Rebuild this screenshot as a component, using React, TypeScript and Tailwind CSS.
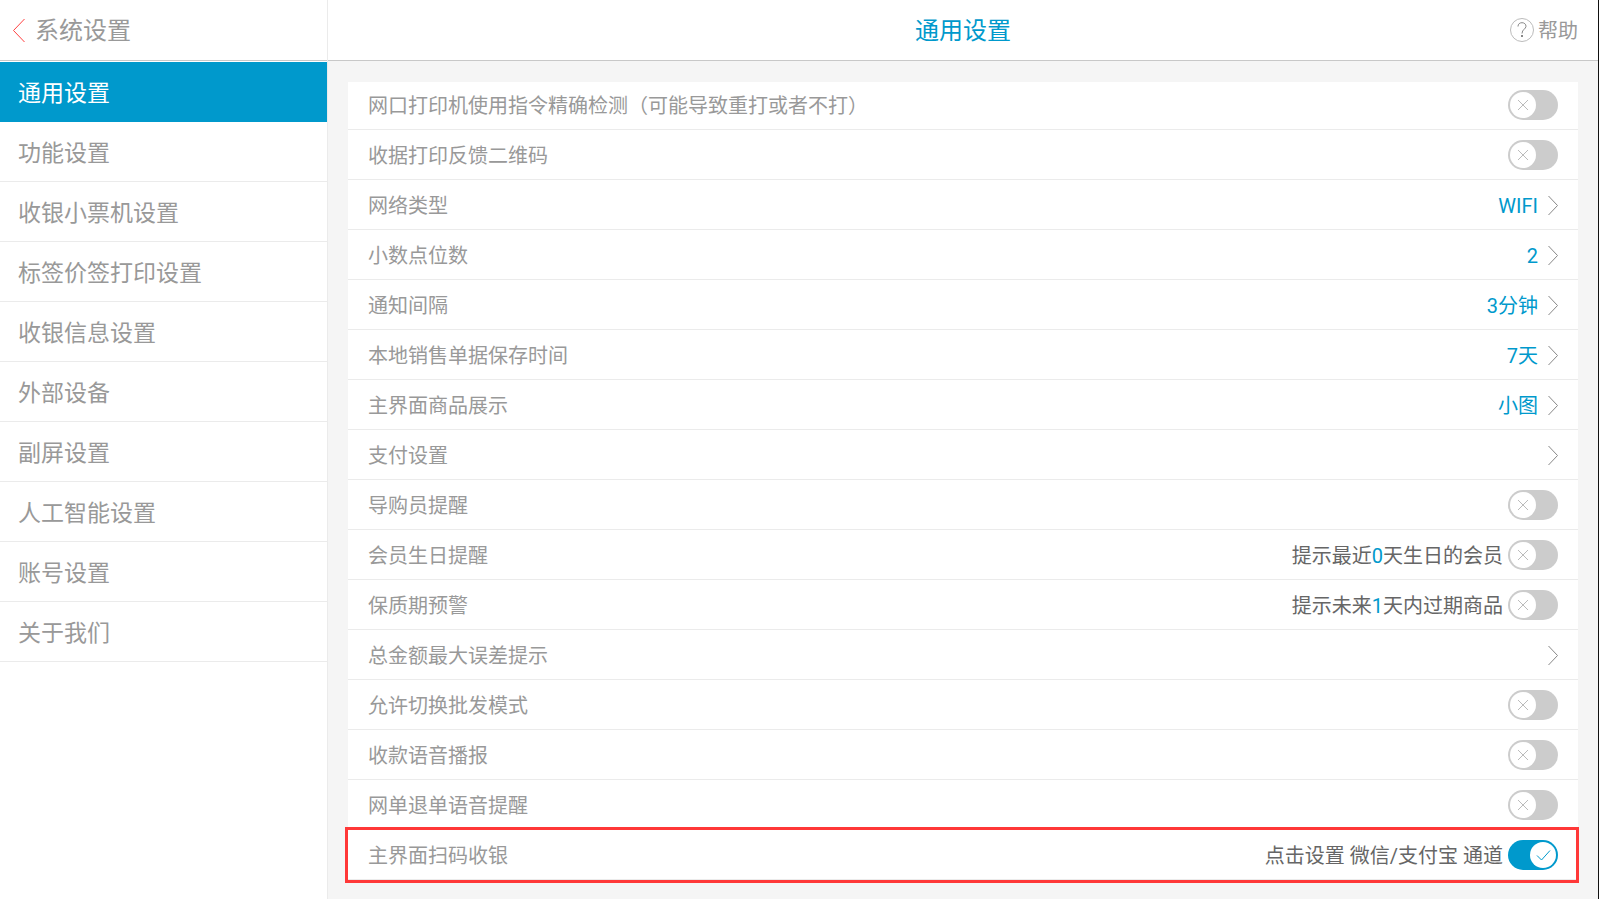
import { useState } from 'react';

interface Setting {
  key: string;
  label: string;
  type: 'toggle' | 'link';
  value?: string;
  hint?: [string, string, string];
  action?: string;
  highlight?: boolean;
}

const MENU = [
  '通用设置',
  '功能设置',
  '收银小票机设置',
  '标签价签打印设置',
  '收银信息设置',
  '外部设备',
  '副屏设置',
  '人工智能设置',
  '账号设置',
  '关于我们',
];

const SETTINGS: Setting[] = [
  { key: 'lan-printer', label: '网口打印机使用指令精确检测（可能导致重打或者不打）', type: 'toggle' },
  { key: 'receipt-qr', label: '收据打印反馈二维码', type: 'toggle' },
  { key: 'network', label: '网络类型', type: 'link', value: 'WIFI' },
  { key: 'decimals', label: '小数点位数', type: 'link', value: '2' },
  { key: 'notify', label: '通知间隔', type: 'link', value: '3分钟' },
  { key: 'retention', label: '本地销售单据保存时间', type: 'link', value: '7天' },
  { key: 'display', label: '主界面商品展示', type: 'link', value: '小图' },
  { key: 'payment', label: '支付设置', type: 'link' },
  { key: 'guide', label: '导购员提醒', type: 'toggle' },
  { key: 'birthday', label: '会员生日提醒', type: 'toggle', hint: ['提示最近', '0', '天生日的会员'] },
  { key: 'expiry', label: '保质期预警', type: 'toggle', hint: ['提示未来', '1', '天内过期商品'] },
  { key: 'deviation', label: '总金额最大误差提示', type: 'link' },
  { key: 'wholesale', label: '允许切换批发模式', type: 'toggle' },
  { key: 'pay-voice', label: '收款语音播报', type: 'toggle' },
  { key: 'refund-voice', label: '网单退单语音提醒', type: 'toggle' },
  { key: 'scan-pay', label: '主界面扫码收银', type: 'toggle', action: '点击设置 微信/支付宝 通道', highlight: true },
];

function Chevron() {
  return (
    <svg className="w-[10px] h-5 shrink-0" viewBox="0 0 10 20" fill="none" stroke="#888" strokeWidth="1" aria-hidden="true">
      <path d="M0.5 1L9.5 10.5L0.5 20" />
    </svg>
  );
}

function Toggle({ id, checked, onChange }: { id: string; checked: boolean; onChange: () => void }) {
  return (
    <span className="relative w-[50px] h-[30px] shrink-0">
      <input
        id={id}
        type="checkbox"
        checked={checked}
        onChange={onChange}
        className="block w-full h-full appearance-none rounded-full bg-[#ccc] checked:bg-[#0099cc] cursor-pointer"
      />
      <svg className="absolute inset-0 w-full h-full pointer-events-none" viewBox="0 0 50 30" fill="none" aria-hidden="true">
        <circle cx={checked ? 35 : 15} cy="15" r="13" fill="#fff" />
        {checked ? (
          <path d="M29 15.5L33.5 20L42 10.5" stroke="#0099cc" />
        ) : (
          <path d="M10 10L20 20M20 10L10 20" stroke="#bbb" />
        )}
      </svg>
    </span>
  );
}

function SettingRow({ item, checked, onToggle }: { item: Setting; checked: boolean; onToggle: () => void }) {
  const row =
    'relative flex items-center w-full h-[50px] pt-px pl-5 pr-5 border-b border-[#ebebeb] text-xl leading-6 text-[#999] group-first:h-12 group-first:pt-0 group-first:pb-px';

  if (item.type === 'link') {
    return (
      <button type="button" className={`${row} text-left`}>
        <span className="flex-1 pt-0.5">{item.label}</span>
        {item.value && <span className="pt-0.5 mr-[10px] text-[#0099cc]">{item.value}</span>}
        <Chevron />
      </button>
    );
  }

  return (
    <div className={row}>
      <label htmlFor={item.key} className="flex-1 pt-0.5">
        {item.label}
      </label>
      {item.hint && (
        <span className="pt-0.5 mr-[5px] text-[#666]">
          {item.hint[0]}
          <button type="button" className="text-[#0099cc]">{item.hint[1]}</button>
          {item.hint[2]}
        </span>
      )}
      {item.action && (
        <button type="button" className="pt-0.5 mr-[5px] text-[#666]">{item.action}</button>
      )}
      <Toggle id={item.key} checked={checked} onChange={onToggle} />
      {item.highlight && (
        <div className="absolute -top-[3px] -left-[3px] -right-px -bottom-1 border-3 border-[#ff3838] pointer-events-none" />
      )}
    </div>
  );
}

export default function App() {
  const [active, setActive] = useState(MENU[0]);
  const [enabled, setEnabled] = useState<Record<string, boolean>>({ 'scan-pay': true });

  const toggle = (key: string) => {
    setEnabled((prev) => ({ ...prev, [key]: !prev[key] }));
  };

  return (
    <div className="flex min-h-screen bg-white border-r border-[#111] font-[Roboto,'Noto_Sans_CJK_SC',sans-serif]">
      {/* Sidebar */}
      <aside className="w-[328px] shrink-0 border-r border-[#ebebeb]">
        <header className="flex items-center h-[61px] pl-[13px] border-b border-[#c8c8c8]">
          <button type="button" className="flex items-center gap-[10px] text-2xl text-[#999]">
            <svg className="w-3 h-6" viewBox="0 0 12 24" fill="none" stroke="#ff4040" strokeWidth="1" aria-hidden="true">
              <path d="M11.5 1L0.5 12.5L11.5 24" />
            </svg>
            <span className="pt-0.5">系统设置</span>
          </button>
        </header>
        <nav className="pt-px">
          {MENU.map((name) => (
            <button
              key={name}
              type="button"
              onClick={() => setActive(name)}
              className={`block w-full h-[60px] pt-1 pl-[18px] text-left text-[23px] leading-7 border-b ${
                name === active ? 'bg-[#0099cc] border-[#0099cc] text-white' : 'border-[#ebebeb] text-[#999]'
              }`}
            >
              {name}
            </button>
          ))}
        </nav>
      </aside>

      {/* Content */}
      <main className="flex flex-col flex-1 min-w-0 bg-[#f5f5f5]">
        <header className="grid grid-cols-[1fr_auto_1fr] items-center h-[61px] px-5 bg-white border-b border-[#c8c8c8]">
          <h1 className="col-start-2 pt-0.5 text-2xl text-[#0099cc]">{active}</h1>
          <button type="button" className="flex items-center gap-1 justify-self-end text-xl leading-6 text-[#999]">
            <svg className="w-6 h-6" viewBox="0 0 24 24" fill="none" strokeWidth="1" aria-hidden="true">
              <circle cx="12" cy="12" r="11.5" stroke="#bbb" />
              <path d="M8 8.5C8 6 9.7 4.7 12 4.7S16 6.2 16 8.3C16 11 12 11.4 12 15.5" stroke="#888" />
              <path d="M11 17h2v2h-2z" fill="#888" />
            </svg>
            <span className="pt-0.5">帮助</span>
          </button>
        </header>
        <ul className="mt-[21px] mx-5 mb-5 bg-white">
          {SETTINGS.map((item) => (
            <li key={item.key} className="group">
              <SettingRow item={item} checked={!!enabled[item.key]} onToggle={() => toggle(item.key)} />
            </li>
          ))}
        </ul>
      </main>
    </div>
  );
}
